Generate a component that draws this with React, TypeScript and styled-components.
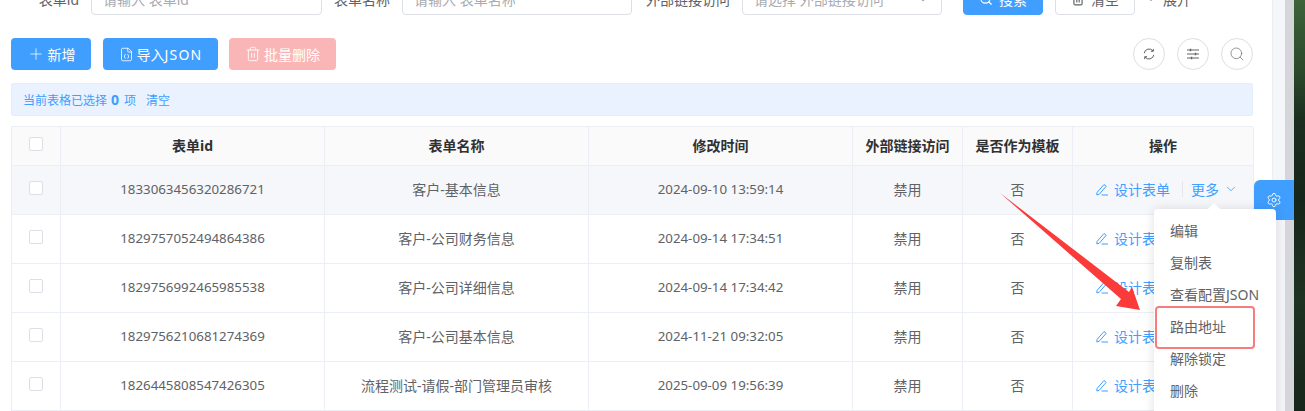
import React from "react";
import styled, { createGlobalStyle } from "styled-components";
import { ChevronDown, FileJson, Plus, Search, Settings, Trash2 } from "lucide-react";

const GlobalStyle = createGlobalStyle`
  html, body {
    margin: 0;
    padding: 0;
    background: #fff;
  }
  * {
    box-sizing: border-box;
  }
  body {
    font-family: "Noto Sans", "Noto Sans CJK SC", sans-serif;
    font-size: 14px;
    color: #606266;
  }
`;

const Page = styled.div`
  position: relative;
  display: flex;
  width: 1305px;
  height: 411px;
  overflow: hidden;
`;

const Main = styled.div`
  width: 1273px;
  padding: 0 19px 0 11px;
  border-right: 1px solid #eceef2;
  background: #fff;
`;

const ScrollGutter = styled.div`
  width: 12px;
  background: #f5f6f9;
`;

const ScrollEdge = styled.div`
  width: 9px;
  background: #d5d6da;
`;

const Wallpaper = styled.div`
  flex: 1;
  background: linear-gradient(180deg, #3d6339 0, #2b4a2c 70px, #1b2e1f 120px, #16261a 200px, #1f3322 300px, #16261a 411px);
`;

const SearchForm = styled.div`
  display: flex;
  align-items: center;
  height: 32px;
  margin-top: -17px;
`;

const FieldLabel = styled.label<{ $width: number }>`
  width: ${(p) => p.$width}px;
  padding-right: 12px;
  text-align: right;
  color: #606266;
  white-space: nowrap;
`;

const FieldInput = styled.div<{ $width: number }>`
  display: flex;
  align-items: center;
  justify-content: space-between;
  width: ${(p) => p.$width}px;
  height: 32px;
  padding: 0 11px;
  border: 1px solid #dcdfe6;
  border-radius: 4px;
  color: #a8abb2;
  white-space: nowrap;
`;

const FormButton = styled.button<{ $primary?: boolean; $left: number }>`
  display: flex;
  align-items: center;
  justify-content: center;
  gap: 6px;
  width: 80px;
  height: 32px;
  margin-left: ${(p) => p.$left}px;
  padding: 0;
  border: 1px solid ${(p) => (p.$primary ? "#409eff" : "#dcdfe6")};
  border-radius: 4px;
  background: ${(p) => (p.$primary ? "#409eff" : "#fff")};
  color: ${(p) => (p.$primary ? "#fff" : "#606266")};
  font: inherit;
`;

const ExpandLink = styled.span`
  display: flex;
  align-items: center;
  gap: 6px;
  margin-left: 10px;
`;

const Toolbar = styled.div`
  display: flex;
  align-items: center;
  height: 32px;
  margin-top: 23px;
`;

const ToolButton = styled.button<{ $width: number; $danger?: boolean; $left?: number }>`
  display: flex;
  align-items: center;
  justify-content: center;
  gap: 3px;
  width: ${(p) => p.$width}px;
  height: 32px;
  margin-left: ${(p) => p.$left ?? 0}px;
  padding: 0;
  border: 0;
  border-radius: 4px;
  background: ${(p) => (p.$danger ? "#fab6b6" : "#409eff")};
  color: #fff;
  font: inherit;
`;

const WideLatin = styled.span`
  margin-left: -3px;
  letter-spacing: 1.2px;
`;

const CircleGroup = styled.div`
  display: flex;
  gap: 12px;
  margin-left: auto;
`;

const CircleButton = styled.div`
  display: flex;
  align-items: center;
  justify-content: center;
  width: 32px;
  height: 32px;
  border: 1px solid #dcdfe6;
  border-radius: 50%;
  color: #606266;
`;

const SelectionBar = styled.div`
  display: flex;
  align-items: center;
  height: 33px;
  margin-top: 13px;
  padding-left: 11px;
  border: 1px solid #e3eefb;
  border-radius: 2px;
  background: #e9f2fe;
  color: #409eff;
  font-size: 12px;
`;

const SelectedCount = styled.b`
  margin: 0 5px 0 4px;
  font-size: 14px;
`;

const ClearLink = styled.span`
  margin-left: 10px;
  font-size: 12px;
`;

const Table = styled.div`
  margin-top: 10px;
  width: 1242px;
  border-top: 1px solid #ebeef5;
  border-left: 1px solid #ebeef5;
`;

const TableRow = styled.div<{ $kind?: "head" | "hover" }>`
  display: grid;
  grid-template-columns: 49px 264px 264px 264px 110px 110px 181px;
  height: ${(p) => (p.$kind === "head" ? 39 : 49)}px;
  background: ${(p) => (p.$kind === "head" ? "#fafafa" : p.$kind === "hover" ? "#f5f7fa" : "#fff")};
`;

const Cell = styled.div<{ $head?: boolean }>`
  display: flex;
  align-items: center;
  justify-content: center;
  padding-bottom: 2px;
  border-right: 1px solid #ebeef5;
  border-bottom: 1px solid #ebeef5;
  color: ${(p) => (p.$head ? "#303133" : "#606266")};
  font-weight: ${(p) => (p.$head ? 700 : 400)};
  white-space: nowrap;
`;

const NumberText = styled.span`
  font-size: 13.3px;
`;

const CheckBox = styled.span`
  width: 14px;
  height: 14px;
  margin-top: -2px;
  border: 1px solid #dcdfe6;
  border-radius: 2px;
  background: #fff;
`;

const ActionCell = styled(Cell)`
  justify-content: flex-start;
  padding-left: 22px;
  color: #409eff;
`;

const ActionLink = styled.span`
  display: flex;
  align-items: center;
  gap: 5px;
`;

const ActionDivider = styled.span`
  width: 1px;
  height: 16px;
  margin: 0 8px 0 12px;
  background: #e4e7ed;
`;

const SettingsTab = styled.div`
  position: absolute;
  left: 1254px;
  top: 180px;
  display: flex;
  align-items: center;
  justify-content: center;
  width: 40px;
  height: 40px;
  border-radius: 6px 0 0 6px;
  background: #409eff;
  color: #fff;
`;

const DropMenu = styled.ul`
  position: absolute;
  left: 1154px;
  top: 209px;
  width: 122px;
  height: 220px;
  margin: 0;
  padding: 6px 0;
  border-radius: 4px;
  background: #fff;
  box-shadow: 0 0 12px rgba(0, 0, 0, 0.12);
  list-style: none;
`;

const MenuArrow = styled.span`
  position: absolute;
  left: 55px;
  top: -4px;
  width: 10px;
  height: 10px;
  background: #fff;
  transform: rotate(45deg);
`;

const MenuItem = styled.li`
  position: relative;
  height: 32px;
  padding-left: 16px;
  color: #606266;
  line-height: 32px;
  white-space: nowrap;
`;

const RedMark = styled.div`
  position: absolute;
  left: 1155px;
  top: 306px;
  width: 100px;
  height: 43px;
  border: 2px solid #f87c7c;
  border-radius: 4px;
`;

const ArrowDrawing = styled.svg`
  position: absolute;
  left: 0;
  top: 0;
  pointer-events: none;
`;

const PencilIcon = () => (
  <svg width="14" height="14" viewBox="0 0 14 14" fill="none" stroke="currentColor" strokeWidth="1">
    <path d="M2 10.5 9 2.5l2.2 1.8-7 8-2.4.6z" />
    <path d="M6.5 13h6.5" />
  </svg>
);

const SyncIcon = () => (
  <svg width="14" height="14" viewBox="0 0 14 14" fill="none" stroke="currentColor" strokeWidth="1">
    <path d="M2.2 6.2A4.9 4.9 0 0 1 11 4" />
    <path d="M11.8 7.8A4.9 4.9 0 0 1 3 10" />
    <path d="M11.3 1.9V4.3H8.9" />
    <path d="M2.7 12.1V9.7h2.4" />
  </svg>
);

const TuneIcon = () => (
  <svg width="14" height="14" viewBox="0 0 14 14" fill="none" stroke="currentColor" strokeWidth="1">
    <path d="M1 3h12M1 7h12M1 11h12" />
    <path d="M4.5 1.8v2.4M9.5 5.8v2.4M5.5 9.8v2.4" strokeWidth="1.4" />
  </svg>
);

const rows = [
  ["1833063456320286721", "客户-基本信息", "2024-09-10 13:59:14"],
  ["1829757052494864386", "客户-公司财务信息", "2024-09-14 17:34:51"],
  ["1829756992465985538", "客户-公司详细信息", "2024-09-14 17:34:42"],
  ["1829756210681274369", "客户-公司基本信息", "2024-11-21 09:32:05"],
  ["1826445808547426305", "流程测试-请假-部门管理员审核", "2025-09-09 19:56:39"],
];

const menuItems = ["编辑", "复制表", "查看配置JSON", "路由地址", "解除锁定", "删除"];

export default function App() {
  return (
    <Page>
      <GlobalStyle />
      <Main>
        <SearchForm>
          <FieldLabel $width={80}>表单id</FieldLabel>
          <FieldInput $width={231}>请输入 表单id</FieldInput>
          <FieldLabel $width={80}>表单名称</FieldLabel>
          <FieldInput $width={230}>请输入 表单名称</FieldInput>
          <FieldLabel $width={110}>外部链接访问</FieldLabel>
          <FieldInput $width={200}>
            请选择 外部链接访问
            <ChevronDown size={14} />
          </FieldInput>
          <FormButton $primary $left={21}>
            <Search size={14} />
            搜索
          </FormButton>
          <FormButton $left={12}>
            <Trash2 size={14} />
            清空
          </FormButton>
          <ExpandLink>
            <ChevronDown size={12} />
            展开
          </ExpandLink>
        </SearchForm>
        <Toolbar>
          <ToolButton $width={80}>
            <Plus size={18} strokeWidth={1} />
            新增
          </ToolButton>
          <ToolButton $width={115} $left={12}>
            <FileJson size={15} strokeWidth={1.3} />
            导入
            <WideLatin>JSON</WideLatin>
          </ToolButton>
          <ToolButton $width={107} $left={11} $danger>
            <Trash2 size={16} strokeWidth={1.3} />
            批量删除
          </ToolButton>
          <CircleGroup>
            <CircleButton>
              <SyncIcon />
            </CircleButton>
            <CircleButton>
              <TuneIcon />
            </CircleButton>
            <CircleButton>
              <Search size={16} strokeWidth={1} />
            </CircleButton>
          </CircleGroup>
        </Toolbar>
        <SelectionBar>
          当前表格已选择
          <SelectedCount>0</SelectedCount>
          项
          <ClearLink>清空</ClearLink>
        </SelectionBar>
        <Table>
          <TableRow $kind="head">
            <Cell $head>
              <CheckBox />
            </Cell>
            <Cell $head>表单id</Cell>
            <Cell $head>表单名称</Cell>
            <Cell $head>修改时间</Cell>
            <Cell $head>外部链接访问</Cell>
            <Cell $head>是否作为模板</Cell>
            <Cell $head>操作</Cell>
          </TableRow>
          {rows.map((row, index) => (
            <TableRow key={row[0]} $kind={index === 0 ? "hover" : undefined}>
              <Cell>
                <CheckBox />
              </Cell>
              <Cell>
                <NumberText>{row[0]}</NumberText>
              </Cell>
              <Cell>{row[1]}</Cell>
              <Cell>
                <NumberText>{row[2]}</NumberText>
              </Cell>
              <Cell>禁用</Cell>
              <Cell>否</Cell>
              <ActionCell>
                <ActionLink>
                  <PencilIcon />
                  设计表单
                </ActionLink>
                {index === 0 && <ActionDivider />}
                {index === 0 && (
                  <ActionLink>
                    更多
                    <ChevronDown size={14} strokeWidth={1.4} />
                  </ActionLink>
                )}
              </ActionCell>
            </TableRow>
          ))}
        </Table>
      </Main>
      <ScrollGutter />
      <ScrollEdge />
      <Wallpaper />
      <SettingsTab>
        <Settings size={16} strokeWidth={1.4} />
      </SettingsTab>
      <DropMenu>
        <MenuArrow />
        {menuItems.map((item) => (
          <MenuItem key={item}>{item}</MenuItem>
        ))}
      </DropMenu>
      <ArrowDrawing width="1305" height="411" viewBox="0 0 1305 411">
        <path d="M1000 193 1129 292 1132 287 1140 310 1116 306 1121 299z" fill="#fb3a3a" />
      </ArrowDrawing>
      <RedMark />
    </Page>
  );
}
